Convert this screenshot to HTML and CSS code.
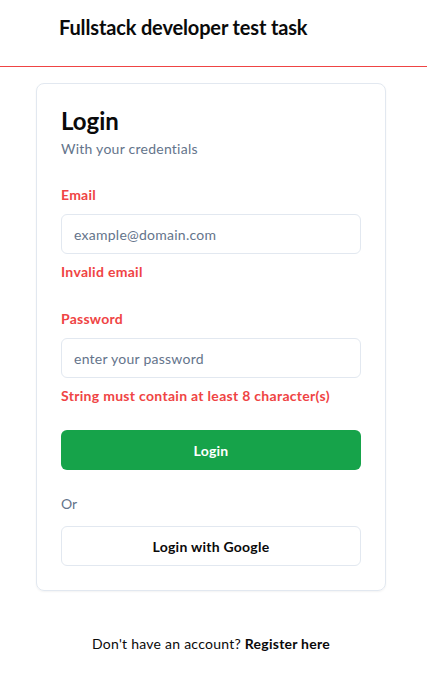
FILE: index.html
```html
<!DOCTYPE html>
<html lang="en">
<head>
<meta charset="utf-8">
<title>Login</title>
<link rel="stylesheet" href="styles.css">
</head>
<body>
<header class="site-header">
  <h1 class="site-title">Fullstack developer test task</h1>
</header>
<main class="main">
  <section class="card">
    <div class="card-header">
      <h2 class="card-title">Login</h2>
      <p class="card-desc">With your credentials</p>
    </div>
    <form class="form">
      <div class="field">
        <label class="label" for="email">Email</label>
        <input class="input" id="email" type="text" placeholder="example@domain.com">
        <p class="error">Invalid email</p>
      </div>
      <div class="field">
        <label class="label" for="password">Password</label>
        <input class="input" id="password" type="password" placeholder="enter your password">
        <p class="error">String must contain at least 8 character(s)</p>
      </div>
      <button class="btn btn-primary" type="button">Login</button>
    </form>
    <p class="or">Or</p>
    <button class="btn btn-outline" type="button">Login with Google</button>
  </section>
  <p class="footer-text">Don't have an account? <a class="footer-link" href="#">Register here</a></p>
</main>
</body>
</html>
```
FILE: styles.css
```css
* { box-sizing: border-box; }
html, body { margin: 0; padding: 0; }
body {
  font-family: Lato, "Open Sans", sans-serif;
  color: #0a0a0a;
  background: #fff;
}
.site-header {
  height: 67px;
  border-bottom: 1px solid #ef4444;
  padding: 13px 0 0 59px;
}
.site-title {
  margin: 0;
  font-size: 20px;
  line-height: 28px;
  font-weight: 700;
  letter-spacing: -0.15px;
}
.main {
  width: 350px;
  margin: 16px 0 0 36px;
}
.card {
  border: 1px solid #e2e8f0;
  border-radius: 8px;
  box-shadow: 0 1px 2px rgba(0,0,0,0.05);
  padding: 25px 24px 24px;
}
.card-header { display: flex; flex-direction: column; gap: 6px; }
.card-title {
  margin: 0;
  font-size: 24px;
  line-height: 24px;
  font-weight: 700;
}
.card-desc {
  margin: 0;
  font-size: 14px;
  line-height: 20px;
  letter-spacing: 0.25px;
  color: #64748b;
}
.form { margin-top: 26px; display: flex; flex-direction: column; }
.field { display: flex; flex-direction: column; margin-bottom: 27px; }
.label {
  font-size: 14px;
  line-height: 20px;
  font-weight: 700;
  letter-spacing: 0.25px;
  color: #ef4444;
  margin-bottom: 9px;
}
.input {
  height: 40px;
  border: 1px solid #e2e8f0;
  border-radius: 6px;
  padding: 0 12px;
  font-family: inherit;
  font-size: 14px;
  letter-spacing: 0.25px;
  color: #0a0a0a;
  background: #fff;
  outline: none;
}
.input::placeholder { color: #64748b; }
.error {
  margin: 8px 0 0;
  font-size: 14px;
  line-height: 20px;
  font-weight: 700;
  letter-spacing: 0.3px;
  color: #ef4444;
}
.field:nth-child(2) { margin-bottom: 24px; }
.btn {
  display: block;
  width: 100%;
  height: 40px;
  border-radius: 6px;
  font-family: inherit;
  font-size: 14px;
  font-weight: 700;
  letter-spacing: 0.25px;
  cursor: pointer;
}
.btn-primary {
  background: #16a34a;
  color: #fff;
  border: none;
}
.btn-outline {
  background: #fff;
  color: #0a0a0a;
  border: 1px solid #e2e8f0;
}
.or {
  margin: 24px 0 12px;
  font-size: 14px;
  line-height: 20px;
  color: #64748b;
}
.footer-text {
  margin: 43px 0 0;
  text-align: center;
  font-size: 14px;
  line-height: 20px;
  letter-spacing: 0.25px;
  color: #0a0a0a;
}
.footer-link {
  color: #0a0a0a;
  font-weight: 700;
  text-decoration: none;
}
```
